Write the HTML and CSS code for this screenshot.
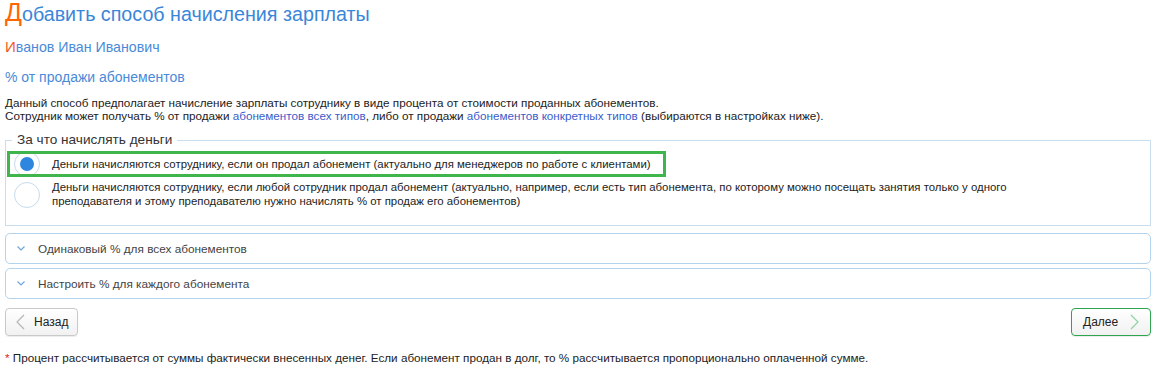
FILE: index.html
```html
<!DOCTYPE html>
<html lang="ru">
<head>
<meta charset="UTF-8">
<title>Добавить способ начисления зарплаты</title>
<link rel="stylesheet" href="styles.css">
</head>
<body>
<div class="page">
    <h1 class="title"><span class="cap">Д</span>обавить способ начисления зарплаты</h1>
    <div class="employee"><span class="cap">И</span>ванов Иван Иванович</div>
    <div class="method">% от продажи абонементов</div>
    <p class="descr">Данный способ предполагает начисление зарплаты сотруднику в виде процента от стоимости проданных абонементов.<br>
    Сотрудник может получать % от продажи <a href="#">абонементов всех типов</a>, либо от продажи <a href="#">абонементов конкретных типов</a> (выбираются в настройках ниже).</p>

    <fieldset class="who">
        <legend>За что начислять деньги</legend>
        <label class="option selected">
            <span class="radio"></span>
            <span class="option-text">Деньги начисляются сотруднику, если он продал абонемент (актуально для менеджеров по работе с клиентами)</span>
        </label>
        <label class="option">
            <span class="radio"></span>
            <span class="option-text">Деньги начисляются сотруднику, если любой сотрудник продал абонемент (актуально, например, если есть тип абонемента, по которому можно посещать занятия только у одного преподавателя и этому преподавателю нужно начислять % от продаж его абонементов)</span>
        </label>
    </fieldset>

    <div class="panel">
        <svg class="chevron" width="8" height="5" viewBox="0 0 8 5"><path d="M0.5 0.5 L4 4 L7.5 0.5" fill="none" stroke="#6ea5dc" stroke-width="1.2"/></svg>
        Одинаковый % для всех абонементов
    </div>
    <div class="panel">
        <svg class="chevron" width="8" height="5" viewBox="0 0 8 5"><path d="M0.5 0.5 L4 4 L7.5 0.5" fill="none" stroke="#6ea5dc" stroke-width="1.2"/></svg>
        Настроить % для каждого абонемента
    </div>

    <div class="actions">
        <button class="btn btn-back">
            <svg width="9" height="16" viewBox="0 0 9 16"><path d="M8 1 L1 8 L8 15" fill="none" stroke="#b5b5b5" stroke-width="1.2"/></svg>
            Назад
        </button>
        <button class="btn btn-next">
            Далее
            <svg width="9" height="16" viewBox="0 0 9 16"><path d="M1 1 L8 8 L1 15" fill="none" stroke="#8fd3a0" stroke-width="1.2"/></svg>
        </button>
    </div>

    <p class="note"><span class="star">*</span> Процент рассчитывается от суммы фактически внесенных денег. Если абонемент продан в долг, то % рассчитывается пропорционально оплаченной сумме.</p>
</div>
</body>
</html>
```

FILE: styles.css
```css
body { margin:0; font-family: "Liberation Sans", Arial, sans-serif; color:#222; background:#fff; }

.page { padding: 0 7px 0 5px; }

.title { margin:0; padding-top:2px; font-size:19.7px; font-weight:normal; line-height:24px; color:#3a86d8; }
.title .cap { color:#ff6600; font-size:25px; line-height:20px; }

.employee { margin-top:12px; font-size:14.2px; line-height:18px; color:#4a8ad8; }
.employee .cap { color:#f25a22; font-size:15px; line-height:16px; }

.method { margin-top:12px; font-size:14px; line-height:18px; color:#4a8ad8; }

.descr { margin:10px 0 0; font-size:11.7px; line-height:13px; }
.descr a { color:#3a5dc9; text-decoration:none; }

/* блок выбора */
.who { margin:9px 0 0; padding:2px 2px 14px 1px; border:1px solid #c8deee; min-width:0; }
.who legend { margin-left:5px; padding:0 5px; font-size:13.6px; line-height:18px; color:#333; }

.option { display:flex; align-items:flex-start; border:3px solid transparent; padding:0 12px 0 4px; font-size:11.4px; line-height:14px; cursor:pointer; }
.option .radio { margin-top:2px; }
.option-text { max-width:1000px; }

.option.selected { width:fit-content; align-items:center; border-color:#3fb54b; overflow:hidden; height:20px; }
.option.selected .radio { margin-top:-3px; margin-bottom:-3px; }

.radio { flex:none; width:26px; height:26px; margin-right:12px; box-sizing:border-box; border:1px solid #c5dbec; border-radius:50%; background:#fff; display:flex; align-items:center; justify-content:center; }
.selected .radio::after { content:""; width:14px; height:14px; border-radius:50%; background:#2e86de; }

/* аккордеон */
.panel { display:flex; align-items:center; gap:13px; height:31px; box-sizing:border-box; margin-top:4px; padding-left:11px; border:1px solid #b3d4ec; border-radius:5px; font-size:11.8px; color:#444; }
.who + .panel { margin-top:7px; }

.actions { display:flex; justify-content:space-between; margin-top:9px; }
.btn { display:flex; align-items:center; height:28px; box-sizing:border-box; border-radius:4px; background:linear-gradient(#fff, #f1f1f1); font-family:inherit; font-size:12px; color:#222; cursor:pointer; box-shadow:0 1px 1px rgba(0,0,0,0.08); }
.btn-back { width:73px; padding:0 0 0 10px; gap:9px; border:1px solid #c9c9c9; }
.btn-next { width:80px; padding:0 0 0 11px; gap:12px; border:1px solid #2ea44f; }

.note { margin:15px 0 0; font-size:11.7px; line-height:14px; }
.note .star { color:#e02020; }
```
